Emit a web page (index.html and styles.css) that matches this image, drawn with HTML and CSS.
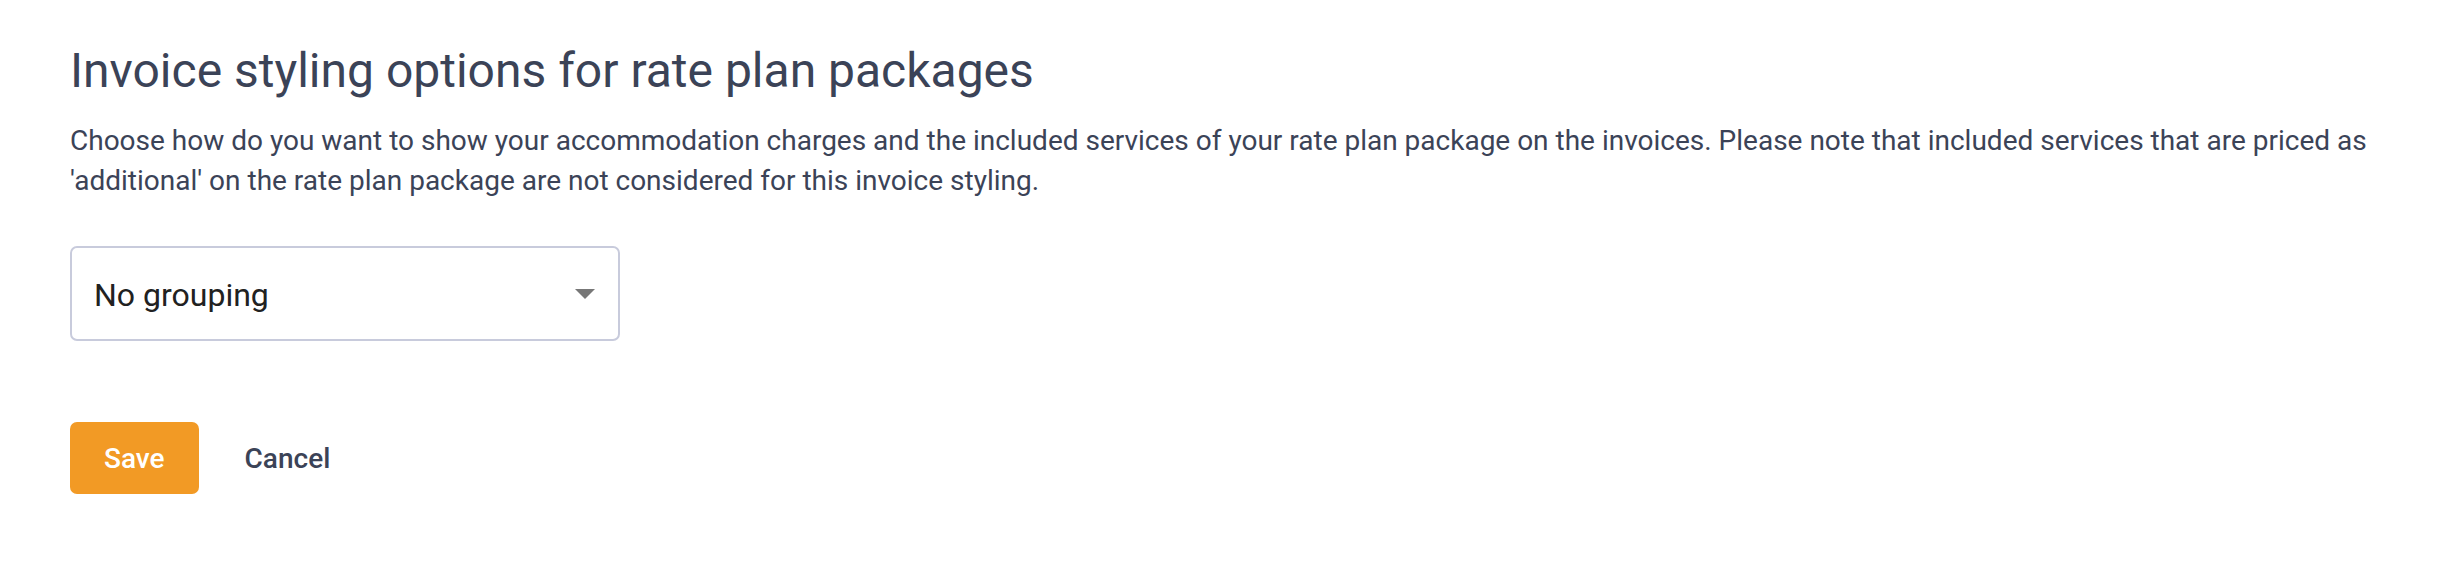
FILE: index.html
```html
<!DOCTYPE html>
<html lang="en">
<head>
    <meta charset="UTF-8">
    <meta name="viewport" content="width=device-width, initial-scale=1.0">
    <title>Invoice styling options</title>
    <link rel="stylesheet" href="styles.css">
</head>
<body>
    <div class="page">
        <h1 class="page-title">Invoice styling options for rate plan packages</h1>
        <p class="page-description">
            Choose how do you want to show your accommodation charges and the included services of your rate plan package on the invoices. Please note that included services that are priced as 'additional' on the rate plan package are not considered for this invoice styling.
        </p>

        <!-- Grouping select -->
        <div class="select-field">
            <span class="select-value">No grouping</span>
            <span class="select-arrow"></span>
        </div>

        <div class="actions">
            <button class="btn btn-primary" type="button">Save</button>
            <button class="btn btn-link" type="button">Cancel</button>
        </div>
    </div>
</body>
</html>
```

FILE: styles.css
```css
* {
    margin: 0;
    padding: 0;
    box-sizing: border-box;
}

body {
    background-color: #ffffff;
    font-family: Roboto, 'Liberation Sans', sans-serif;
    color: #3b4357;
}

.page {
    padding: 43px 70px 0 70px;
}

.page-title {
    font-size: 48px;
    font-weight: 400;
    line-height: 56px;
    color: #3b4357;
}

/* Description under the title */
.page-description {
    margin-top: 22px;
    font-size: 28px;
    line-height: 40px;
    color: #3b4357;
}

.select-field {
    margin-top: 45px;
    width: 550px;
    height: 95px;
    display: flex;
    align-items: center;
    justify-content: space-between;
    padding: 0 23px 0 22px;
    border: 2px solid #c8cbdc;
    border-radius: 7px;
    background: #ffffff;
    cursor: pointer;
}

.select-value {
    font-size: 32px;
    line-height: 32px;
    color: #212121;
    padding-top: 3px;
}

.select-arrow {
    width: 0;
    height: 0;
    border-left: 10px solid transparent;
    border-right: 10px solid transparent;
    border-top: 10px solid #777777;
}

.actions {
    display: flex;
    gap: 12px;
    margin-top: 81px;
}

.btn {
    height: 72px;
    padding: 0 34px;
    border: none;
    border-radius: 7px;
    font-family: Roboto, 'Liberation Sans', sans-serif;
    font-size: 28px;
    font-weight: 500;
    cursor: pointer;
    background: transparent;
}

.btn-primary {
    background-color: #f29a25;
    color: #ffffff;
}

.btn-link {
    color: #3b4357;
}
```
